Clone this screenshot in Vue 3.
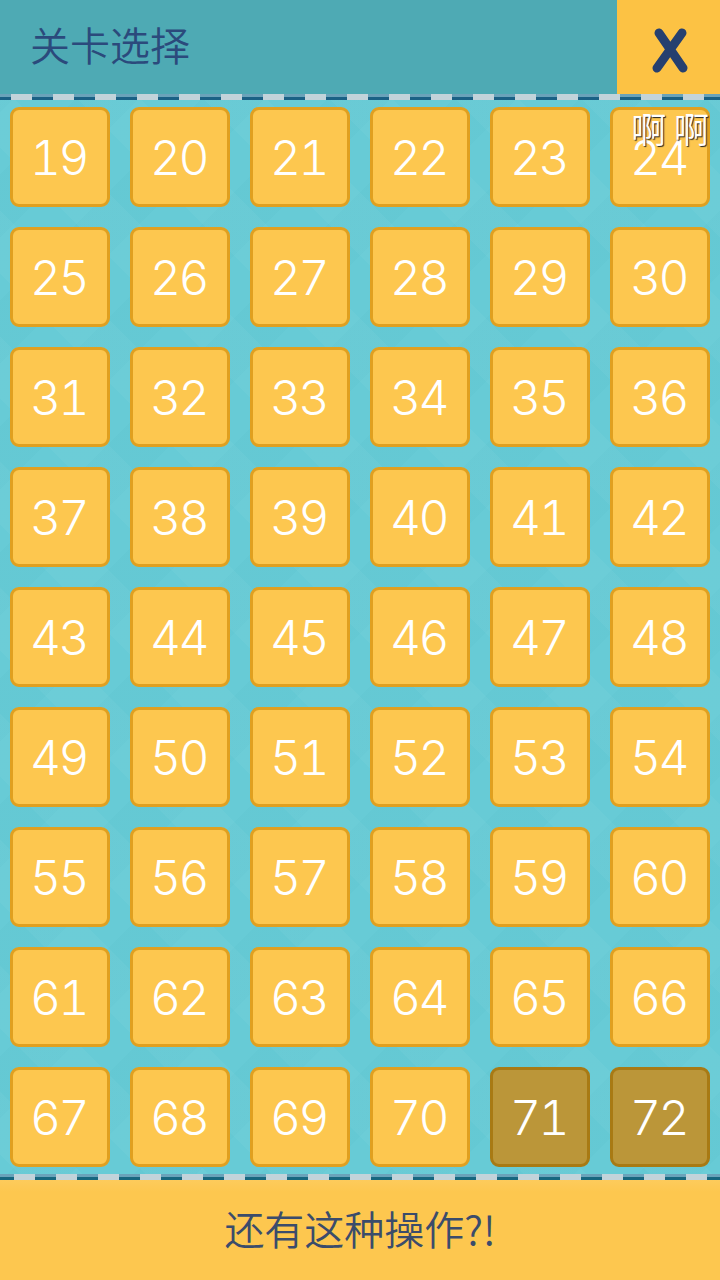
<script setup>
const levels = []
for (let n = 19; n <= 72; n++) {
  levels.push({ n, locked: n > 70 })
}
</script>

<template>
  <div class="page">
    <header class="top">
      <h1 class="title">关卡选择</h1>
      <button class="close" aria-label="关闭">
        <svg width="103" height="94" viewBox="0 0 103 94">
          <path d="M42 33 L66 68 M65 33 L40 68" fill="none" stroke="#26406f" stroke-width="9" stroke-linecap="round" />
        </svg>
      </button>
    </header>
    <div class="strip strip-top"></div>
    <main class="board">
      <div class="grid">
        <div v-for="item in levels" :key="item.n" class="level" :class="{ locked: item.locked }">
          {{ item.n }}
        </div>
      </div>
      <div class="tag">啊 啊</div>
    </main>
    <div class="strip strip-bottom"></div>
    <footer class="bottom">还有这种操作?!</footer>
  </div>
</template>

<style scoped>
.page {
  width: 720px;
  height: 1280px;
  display: flex;
  flex-direction: column;
  overflow: hidden;
  background-color: #67cbd6;
  background-image:
    repeating-linear-gradient(45deg, rgba(255, 255, 255, 0.035) 0 44.5px, rgba(255, 255, 255, 0) 44.5px 89px),
    repeating-linear-gradient(-45deg, rgba(30, 140, 150, 0.035) 0 44.5px, rgba(30, 140, 150, 0) 44.5px 89px);
  font-family: "Inter", "Noto Sans CJK SC", sans-serif;
}
.top {
  height: 94px;
  flex: none;
  display: flex;
  justify-content: space-between;
  background: #4eaab4;
}
.title {
  margin: 0;
  padding-left: 30px;
  font-family: "Noto Sans CJK SC", sans-serif;
  font-size: 40px;
  font-weight: 350;
  line-height: 88px;
  color: #2b4a7c;
}
.close {
  width: 103px;
  height: 94px;
  border: none;
  padding: 0;
  background: #fcc244;
}
.close svg {
  display: block;
}
.strip {
  height: 6px;
  flex: none;
}
.strip-top {
  background-image:
    repeating-linear-gradient(90deg, transparent 0 11px, #c2d3da 11px 32px, transparent 32px 42px),
    linear-gradient(180deg, #6aa3ba 50%, #1a6185 50%);
}
.strip-bottom {
  background-image:
    repeating-linear-gradient(90deg, transparent 0 14px, #c2d3da 14px 35px, transparent 35px 42px),
    linear-gradient(180deg, #6aa3ba 50%, #17677f 50%);
}
.board {
  flex: 1;
  position: relative;
  padding: 7px 10px;
}
.grid {
  display: grid;
  grid-template-columns: repeat(6, 100px);
  grid-auto-rows: 100px;
  gap: 20px;
}
.level {
  box-sizing: border-box;
  border: 3px solid #e0a020;
  border-radius: 9px;
  padding-right: 3px;
  background: #fdc74f;
  color: #fff;
  font-size: 48px;
  font-weight: 300;
  font-variant-numeric: tabular-nums;
  letter-spacing: -2.5px;
  display: flex;
  align-items: center;
  justify-content: center;
}
.level.locked {
  background: #bb9639;
  border-color: #a87a14;
}
.tag {
  position: absolute;
  top: 9px;
  right: 11px;
  font-family: "Noto Sans CJK SC", sans-serif;
  font-size: 35px;
  font-weight: 350;
  line-height: 38px;
  color: #fff;
  text-shadow: 1px 1px 1px #222;
}
.bottom {
  height: 100px;
  flex: none;
  background: linear-gradient(180deg, #fdcb5c 0, #fdc74f 12px);
  color: #3b4c6b;
  font-family: "Noto Sans CJK SC", sans-serif;
  font-size: 40px;
  font-weight: 350;
  padding-bottom: 4px;
  box-sizing: border-box;
  display: flex;
  align-items: center;
  justify-content: center;
}
</style>
